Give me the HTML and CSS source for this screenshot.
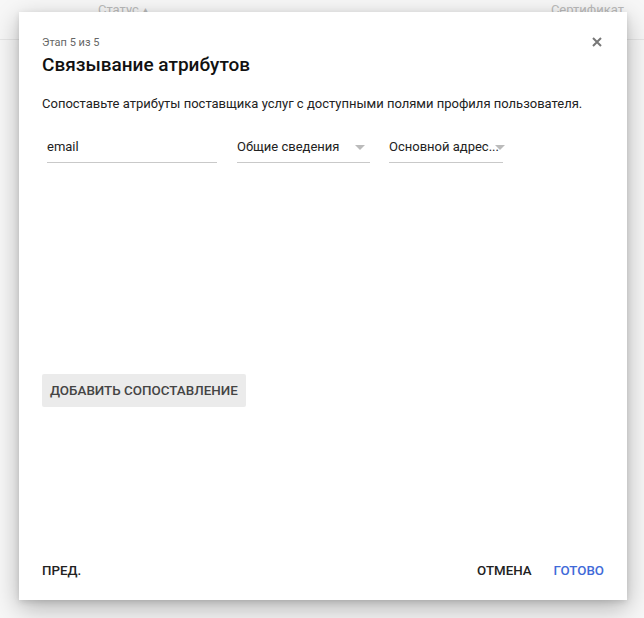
FILE: index.html
```html
<!DOCTYPE html>
<html lang="ru">
<head>
<meta charset="utf-8">
<link rel="stylesheet" href="styles.css">
</head>
<body>
<div class="page">
  <div class="bg-header">
    <span class="bg-status">Статус <span class="arrow">▲</span></span>
    <span class="bg-cert">Сертификат</span>
  </div>
</div>
<div class="dialog">
  <div class="head">
    <div class="step">Этап 5 из 5</div>
    <h1 class="title">Связывание атрибутов</h1>
    <button class="close" aria-label="Закрыть">
      <svg width="10" height="10" viewBox="0 0 10 10"><path d="M1 1L9 9M9 1L1 9" stroke="#777" stroke-width="2"/></svg>
    </button>
  </div>
  <p class="desc">Сопоставьте атрибуты поставщика услуг с доступными полями профиля пользователя.</p>
  <div class="row">
    <div class="field input">email</div>
    <div class="field select s1"><span>Общие сведения</span><i class="tri"></i></div>
    <div class="field select s2"><span>Основной адрес...</span><i class="tri"></i></div>
  </div>
  <button class="add">ДОБАВИТЬ СОПОСТАВЛЕНИЕ</button>
  <div class="footer">
    <button class="link">ПРЕД.</button>
    <div class="right">
      <button class="link">ОТМЕНА</button>
      <button class="link primary">ГОТОВО</button>
    </div>
  </div>
</div>
</body>
</html>
```
FILE: styles.css
```css
html, body { margin: 0; padding: 0; }
body {
  width: 644px; height: 618px; overflow: hidden;
  background: #f7f7f7;
  font-family: Roboto, "Noto Sans", sans-serif;
  position: relative;
}
.page { height: 618px; }
.bg-header {
  height: 40px; border-bottom: 1px solid #e6e6e6;
  display: flex; justify-content: space-between;
  padding: 0 20px 0 98px; box-sizing: border-box;
  font-size: 13px; color: #bbb; line-height: 18px;
}
.bg-status { margin-top: 1px; }
.bg-cert { margin-top: 1px; }
.arrow { font-size: 7px; vertical-align: 2px; }
.dialog {
  position: absolute; left: 19px; top: 12px;
  width: 608px; height: 588px; box-sizing: border-box;
  background: #fff;
  box-shadow: 0 8px 24px rgba(0,0,0,0.28), 0 2px 6px rgba(0,0,0,0.12);
  padding: 24px 23px 20px 23px;
  display: flex; flex-direction: column;
  color: #212121;
}
.head { position: relative; }
.step { font-size: 11px; color: #666; line-height: 14px; }
.title { margin: 3px 0 0; font-size: 19px; font-weight: 500; line-height: 24px; color: #111; }
.close {
  position: absolute; right: 0; top: -3px; border: 0; background: none; padding: 2px; cursor: pointer;
}
.desc { margin: 18px 0 0; font-size: 13px; line-height: 18px; color: #222; }
.row { display: flex; margin-top: 25px; padding-left: 5px; }
.field {
  font-size: 13px; line-height: 18px; color: #222;
  border-bottom: 1px solid #c9c9c9; padding-bottom: 6px;
  height: 18px;
}
.input { width: 170px; margin-right: 20px; }
.select { display: flex; justify-content: space-between; align-items: center; }
.s1 { width: 133px; margin-right: 19px; }
.s2 { width: 114px; }
.s2 span { white-space: nowrap; }
.tri {
  width: 0; height: 0; border-left: 5px solid transparent; border-right: 5px solid transparent;
  border-top: 5px solid #bbb; margin-right: 5px;
}
.s2 .tri { margin-right: 2px; margin-left: -4px; }
.add {
  align-self: flex-start; border: 0; border-radius: 2px;
  background: #ebebeb; color: #444;
  font-family: inherit; font-size: 13.4px; font-weight: 500;
  height: 33px; padding: 0 8px; margin-top: 211px;
}
.footer { margin-top: auto; display: flex; justify-content: space-between; align-items: center; }
.right { display: flex; gap: 22px; }
.link {
  border: 0; background: none; padding: 0; font-family: inherit;
  font-size: 13.3px; font-weight: 500; color: #222; line-height: 18px;
}
.primary { color: #3f6ad8; }
```
